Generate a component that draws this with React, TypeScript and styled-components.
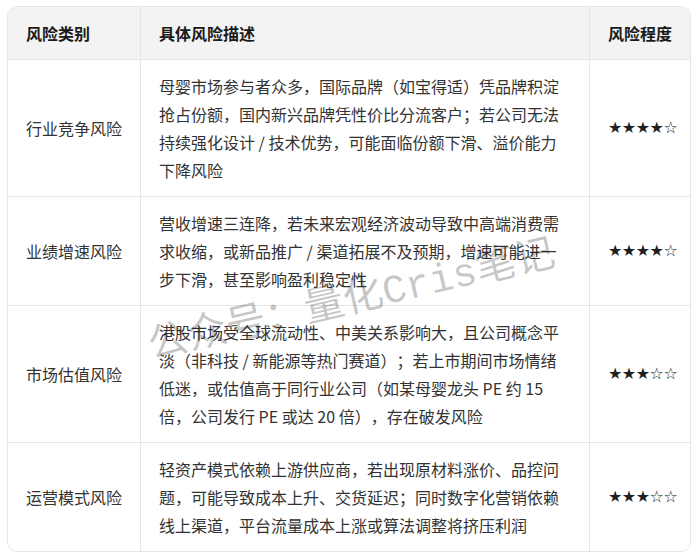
import React from 'react';
import styled, { createGlobalStyle } from 'styled-components';

const GlobalStyle = createGlobalStyle`
  html, body {
    margin: 0;
    padding: 0;
    background: #ffffff;
  }
  body {
    font-family: "Noto Sans CJK SC", "Noto Sans", sans-serif;
    color: #333333;
  }
`;

const Page = styled.div`
  position: relative;
  padding: 6px 8px 6px 7px;
`;

const Frame = styled.div`
  border: 1px solid #e6e6e6;
  border-radius: 10px;
  overflow: hidden;
`;

const Table = styled.table`
  width: 100%;
  border-collapse: separate;
  border-spacing: 0;
  table-layout: fixed;
  font-size: 16px;
  line-height: 28px;
  text-spacing-trim: space-all;
`;

const HeadCell = styled.th<{ $last?: boolean }>`
  background: #f3f3f3;
  font-weight: 700;
  color: #1a1a1a;
  text-align: left;
  padding: 12px 17px 12px 18px;
  border-bottom: 1px solid #e6e6e6;
  border-right: ${({ $last }) => ($last ? 'none' : '1px solid #e6e6e6')};
`;

const Cell = styled.td<{ $last?: boolean; $bottom?: boolean }>`
  padding: 12px 17px 12px 18px;
  vertical-align: middle;
  color: #333333;
  border-bottom: ${({ $bottom }) => ($bottom ? 'none' : '1px solid #e6e6e6')};
  border-right: ${({ $last }) => ($last ? 'none' : '1px solid #e6e6e6')};
`;

const DescCell = styled(Cell)`
  padding-right: 24px;
`;

const Stars = styled.span`
  display: block;
  text-align: center;
  font-family: "DejaVu Sans", sans-serif;
  font-size: 16px;
  letter-spacing: -0.5px;
  color: #1f1f1f;
`;

// 斜着压在表格上的水印
const Watermark = styled.div`
  position: absolute;
  left: 352px;
  top: 302px;
  transform: translate(-50%, -50%) rotate(-13deg);
  font-family: "Liberation Mono", "Noto Sans CJK SC", monospace;
  font-size: 40px;
  line-height: 1;
  color: rgba(0, 0, 0, 0.22);
  white-space: nowrap;
  pointer-events: none;
`;

type Risk = {
  category: string;
  description: string;
  level: string;
};

const risks: Risk[] = [
  {
    category: '行业竞争风险',
    description:
      '母婴市场参与者众多，国际品牌（如宝得适）凭品牌积淀抢占份额，国内新兴品牌凭性价比分流客户；若公司无法持续强化设计 / 技术优势，可能面临份额下滑、溢价能力下降风险',
    level: '★★★★☆',
  },
  {
    category: '业绩增速风险',
    description:
      '营收增速三连降，若未来宏观经济波动导致中高端消费需求收缩，或新品推广 / 渠道拓展不及预期，增速可能进一步下滑，甚至影响盈利稳定性',
    level: '★★★★☆',
  },
  {
    category: '市场估值风险',
    description:
      '港股市场受全球流动性、中美关系影响大，且公司概念平淡（非科技 / 新能源等热门赛道）；若上市期间市场情绪低迷，或估值高于同行业公司（如某母婴龙头 PE 约 15 倍，公司发行 PE 或达 20 倍），存在破发风险',
    level: '★★★☆☆',
  },
  {
    category: '运营模式风险',
    description:
      '轻资产模式依赖上游供应商，若出现原材料涨价、品控问题，可能导致成本上升、交货延迟；同时数字化营销依赖线上渠道，平台流量成本上涨或算法调整将挤压利润',
    level: '★★★☆☆',
  },
];

const App: React.FC = () => {
  return (
    <Page>
      <GlobalStyle />
      <Frame>
        <Table>
          <colgroup>
            <col style={{ width: 133 }} />
            <col style={{ width: 449 }} />
            <col />
          </colgroup>
          <thead>
            <tr>
              <HeadCell>风险类别</HeadCell>
              <HeadCell>具体风险描述</HeadCell>
              <HeadCell $last>风险程度</HeadCell>
            </tr>
          </thead>
          <tbody>
            {risks.map((r, i) => {
              const bottom = i === risks.length - 1;
              return (
                <tr key={r.category}>
                  <Cell $bottom={bottom}>{r.category}</Cell>
                  <DescCell $bottom={bottom}>{r.description}</DescCell>
                  <Cell $bottom={bottom} $last>
                    <Stars>{r.level}</Stars>
                  </Cell>
                </tr>
              );
            })}
          </tbody>
        </Table>
      </Frame>
      <Watermark>公众号：量化Cris笔记</Watermark>
    </Page>
  );
};

export default App;
